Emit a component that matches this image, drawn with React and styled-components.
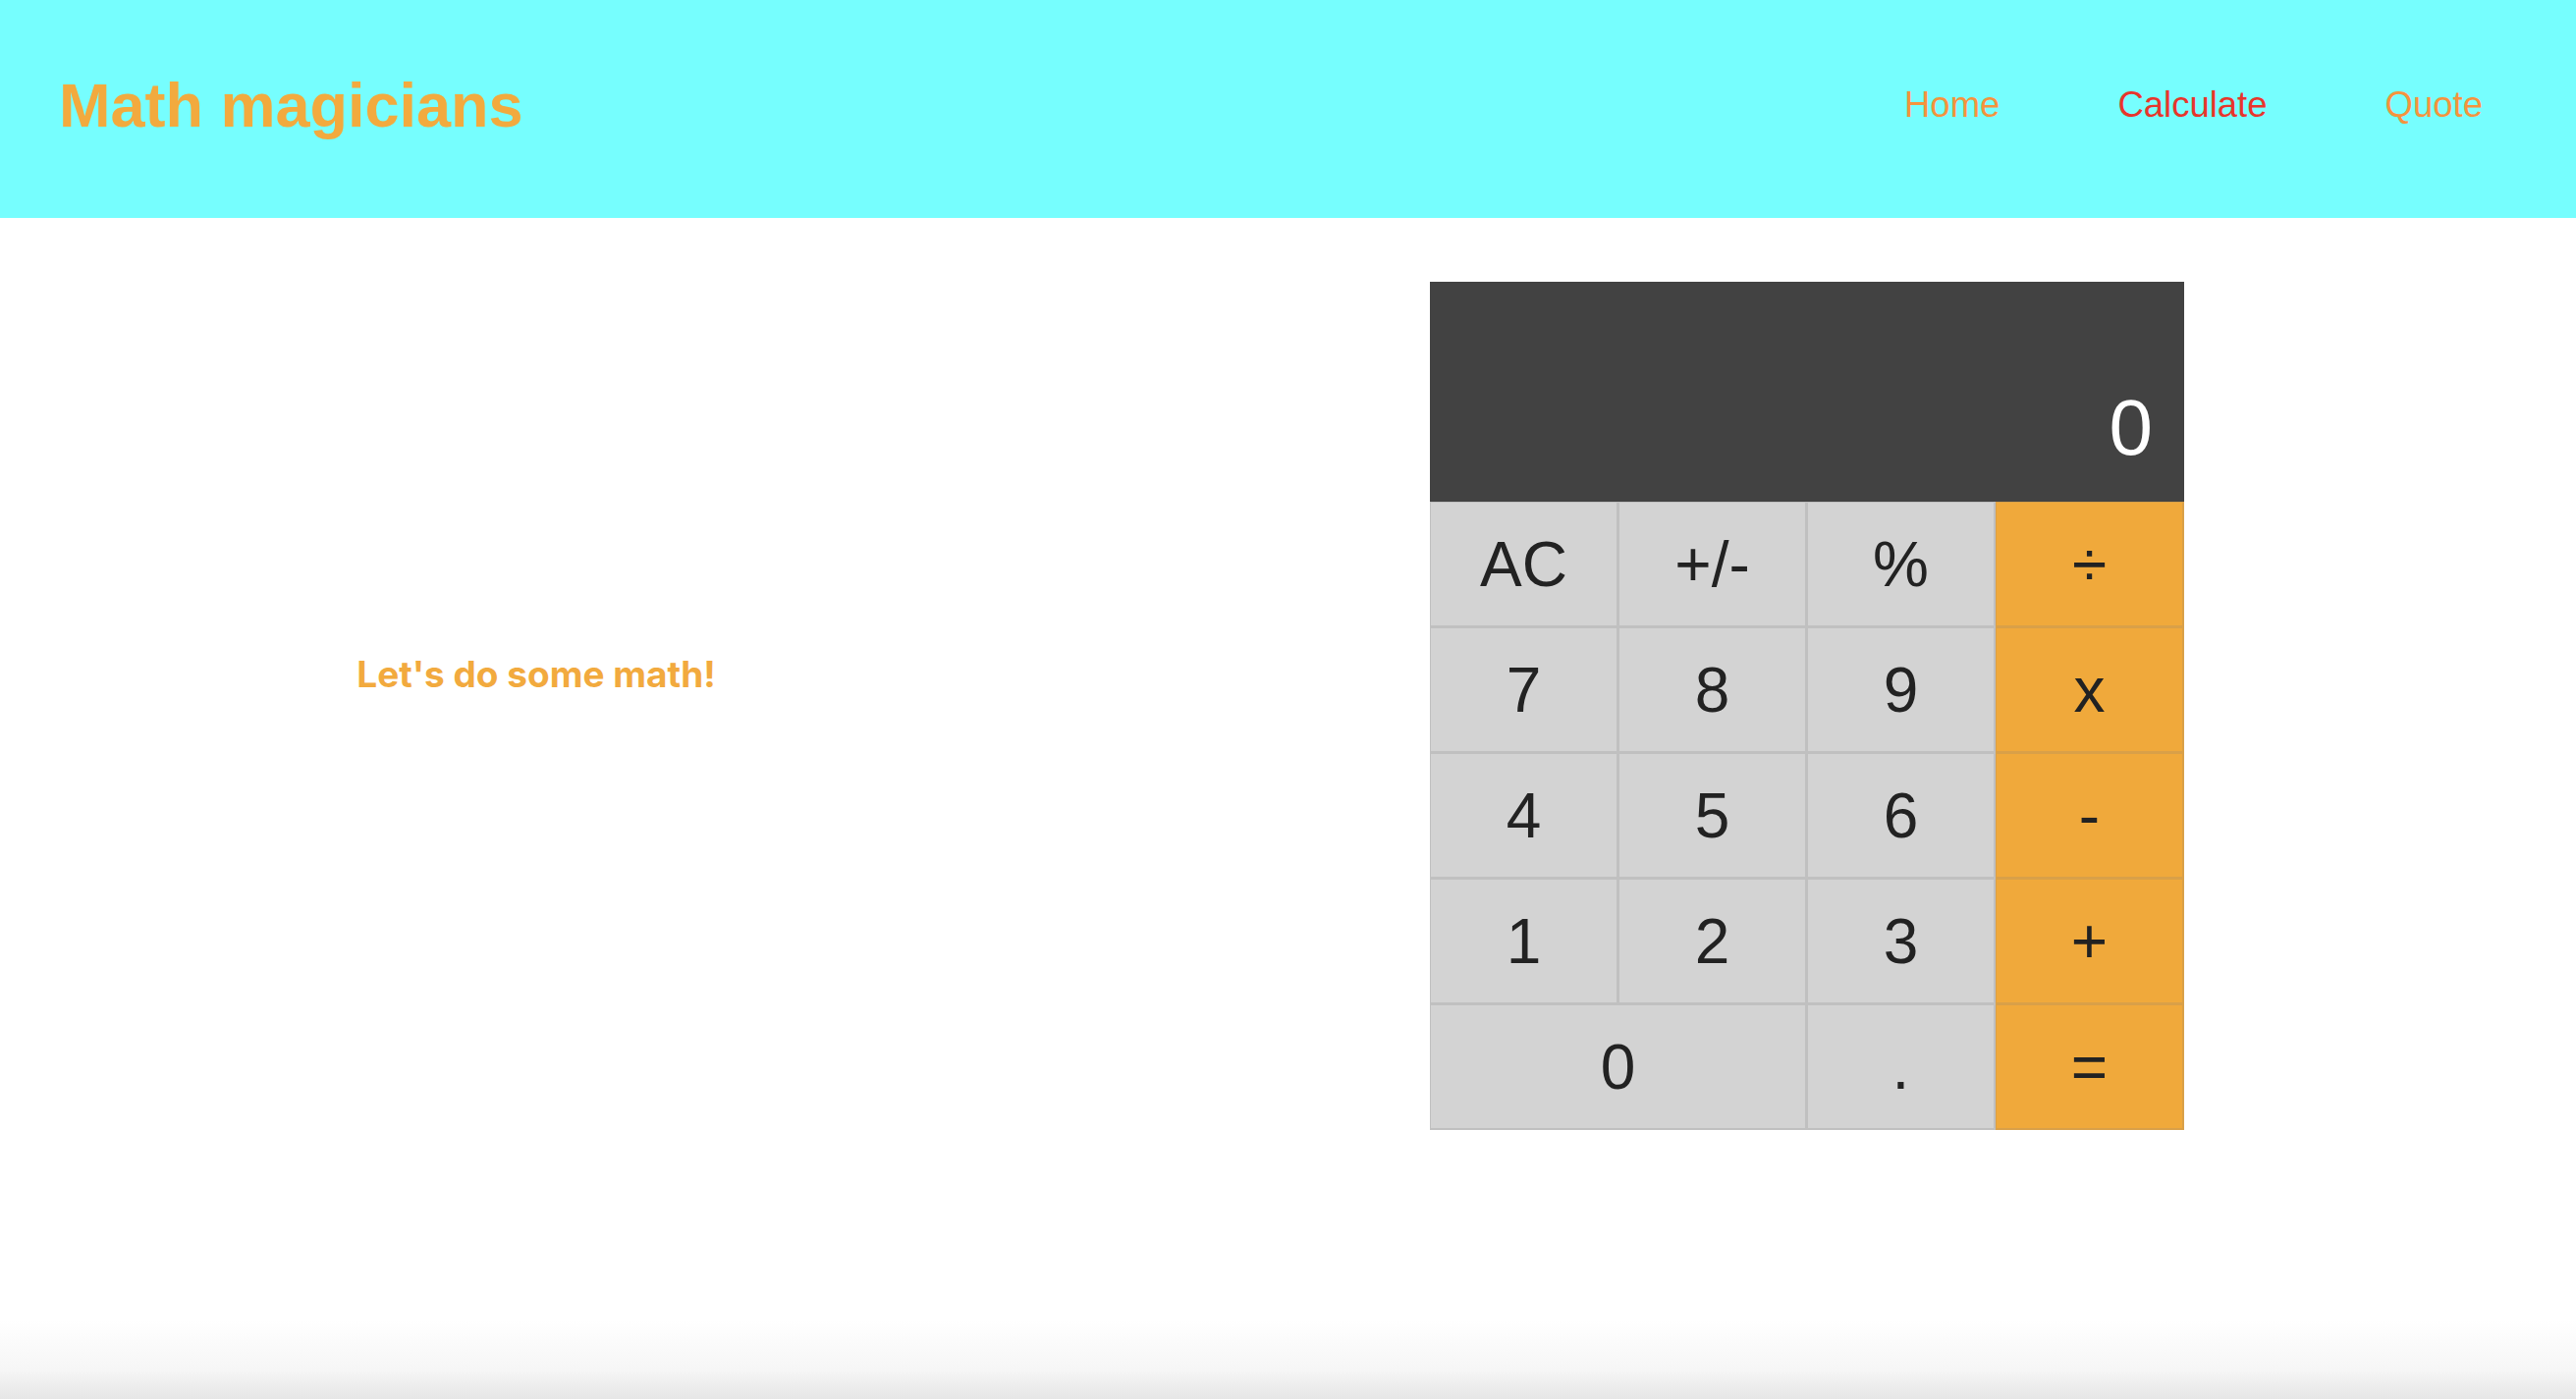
import React from "react";
import styled, { createGlobalStyle } from "styled-components";

const GlobalStyle = createGlobalStyle`
  html, body {
    margin: 0;
    padding: 0;
    background: #ffffff;
  }
  body {
    font-family: "Liberation Sans", Arial, sans-serif;
  }
  * { box-sizing: border-box; }
`;

const Page = styled.div`
  min-height: 100vh;
  display: flex;
  flex-direction: column;
  background: linear-gradient(
    to bottom,
    #ffffff 0,
    #ffffff calc(100% - 80px),
    #f6f6f6 calc(100% - 30px),
    #e6e6e6 100%
  );
`;

const Header = styled.header`
  height: 222px;
  background: #76fefe;
  display: flex;
  align-items: center;
  justify-content: space-between;
  padding: 0 95px 8px 60px;
`;

const Title = styled.h1`
  margin: 0;
  font-family: "Liberation Sans", Arial, sans-serif;
  font-weight: 700;
  font-size: 63px;
  line-height: 1.15;
  color: #f2aa3e;
`;

const Nav = styled.nav`
  display: flex;
  align-items: center;
  gap: 120px;
`;

const NavLink = styled.a`
  font-family: "Liberation Sans", Arial, sans-serif;
  font-size: 36.5px;
  line-height: 1.15;
  text-decoration: none;
  color: ${(p) => (p.$active ? "#e8352c" : "#f5933d")};
  cursor: pointer;
`;

const Main = styled.main`
  display: flex;
  align-items: flex-start;
  padding-top: 65px;
`;

const IntroPane = styled.section`
  width: 1092px;
  margin-right: 364px;
  display: flex;
  justify-content: center;
  padding-top: 376px;
`;

const Intro = styled.p`
  margin: 0;
  font-family: Inter, "Liberation Sans", sans-serif;
  font-weight: 700;
  font-size: 37px;
  line-height: 48px;
  color: #f2aa3e;
`;

const Calculator = styled.div`
  display: grid;
  grid-template-columns: repeat(4, 192px);
  grid-template-rows: 224px repeat(5, 128px);
`;

const Screen = styled.div`
  grid-column: 1 / -1;
  background: #424242;
  color: #ffffff;
  display: flex;
  align-items: flex-end;
  justify-content: flex-end;
  padding: 0 32px 35px;
  font-family: "Liberation Sans", Arial, sans-serif;
  font-size: 80px;
  line-height: 1;
`;

const Key = styled.button`
  grid-column: span ${(p) => p.$span || 1};
  margin: 0;
  padding: 0;
  border-style: solid;
  border-width: 1px 2px 2px 1px;
  border-color: ${(p) => (p.$op ? "#d9a048" : "#c0c0c0")};
  background: ${(p) => (p.$op ? "#f0a93b" : "#d3d3d3")};
  color: #222222;
  font-family: "Liberation Sans", Arial, sans-serif;
  font-size: 64px;
  line-height: 1;
  display: flex;
  align-items: center;
  justify-content: center;
  cursor: pointer;
`;

const rows = [
  [{ l: "AC" }, { l: "+/-" }, { l: "%" }, { l: "÷", op: true }],
  [{ l: "7" }, { l: "8" }, { l: "9" }, { l: "x", op: true }],
  [{ l: "4" }, { l: "5" }, { l: "6" }, { l: "-", op: true }],
  [{ l: "1" }, { l: "2" }, { l: "3" }, { l: "+", op: true }],
  [{ l: "0", span: 2 }, { l: "." }, { l: "=", op: true }],
];

export default function App() {
  return (
    <>
      <GlobalStyle />
      <Page>
        <Header>
          <Title>Math magicians</Title>
          <Nav>
            <NavLink>Home</NavLink>
            <NavLink $active>Calculate</NavLink>
            <NavLink>Quote</NavLink>
          </Nav>
        </Header>
        <Main>
          <IntroPane>
            <Intro>Let's do some math!</Intro>
          </IntroPane>
          <Calculator>
            <Screen>0</Screen>
            {rows.flat().map((k, i) => (
              <Key key={i} type="button" $op={k.op} $span={k.span}>
                {k.l}
              </Key>
            ))}
          </Calculator>
        </Main>
      </Page>
    </>
  );
}
